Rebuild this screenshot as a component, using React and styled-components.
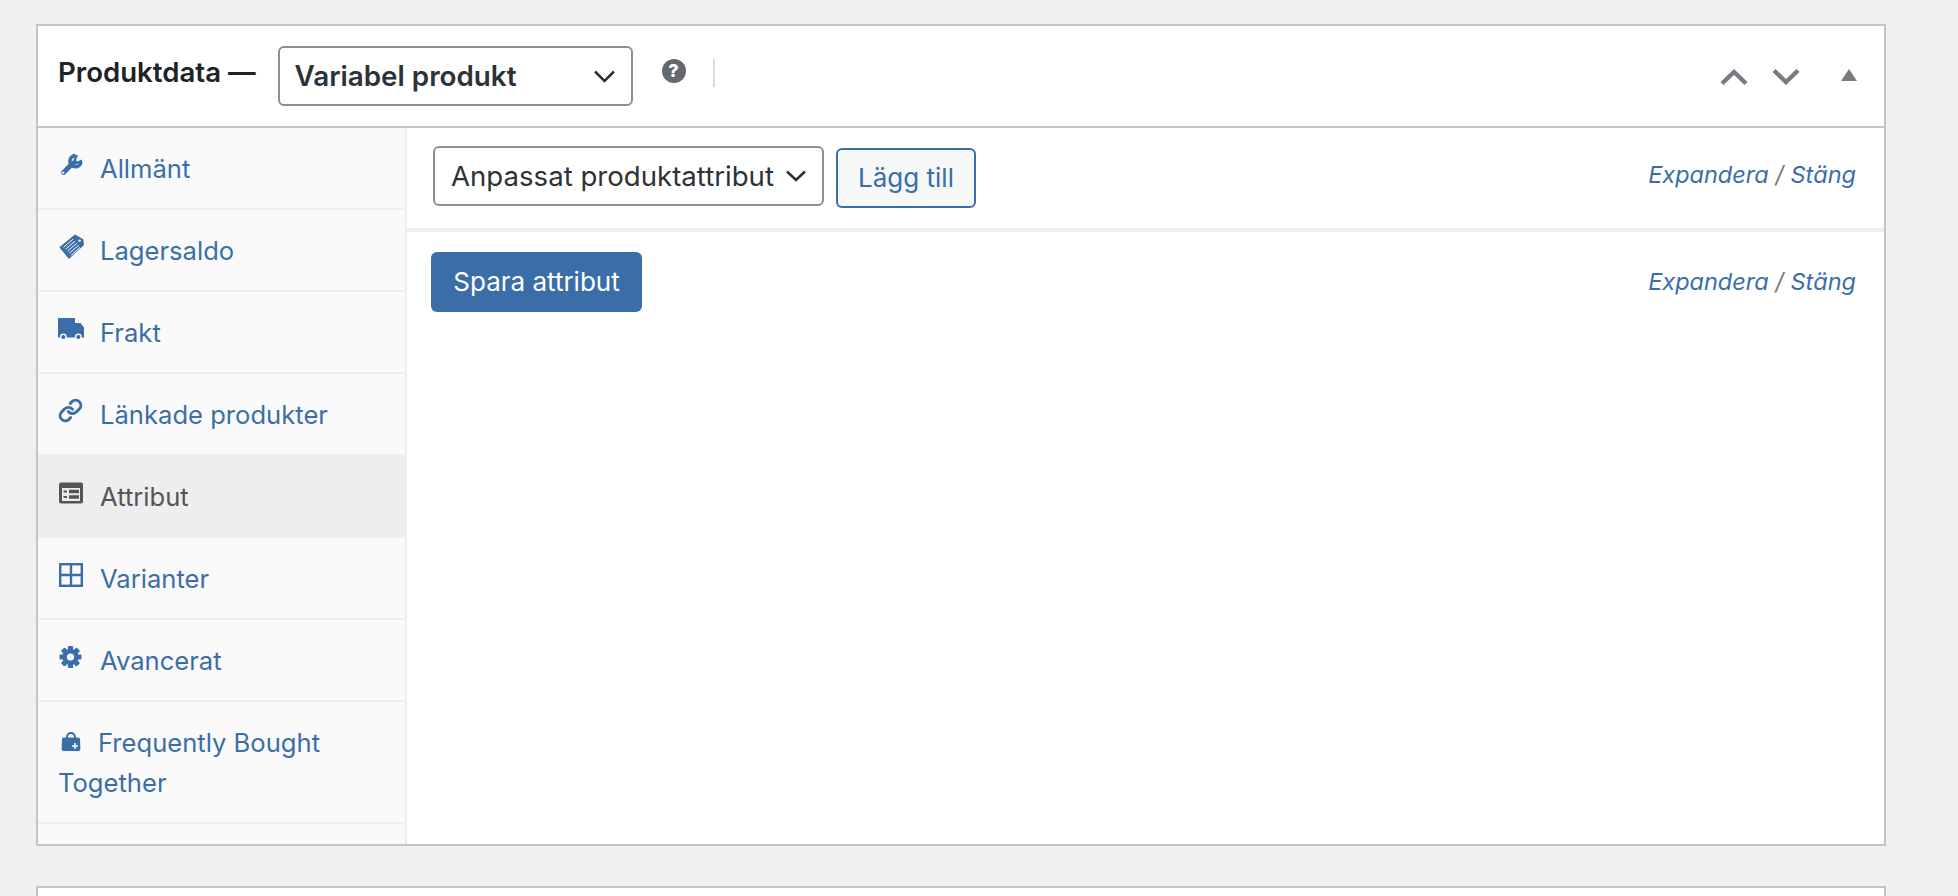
import React from 'react';
import styled, { createGlobalStyle } from 'styled-components';

const GlobalStyle = createGlobalStyle`
  html, body {
    margin: 0;
    height: 100%;
    overflow: hidden;
    background: #f0f0f1;
  }
`;

const BLUE = '#3b6ea9';

const Page = styled.div`
  height: 896px;
  overflow: hidden;
  padding: 24px 72px 0 36px;
  font-family: Inter, "Liberation Sans", sans-serif;
  font-size: 26px;
  line-height: 40px;
  color: #2c3338;
`;

const Card = styled.section`
  box-sizing: border-box;
  width: 1850px;
  height: 822px;
  background: #fff;
  border: 2px solid #c3c4c7;
  display: flex;
  flex-direction: column;
`;

const NextCard = styled.div`
  box-sizing: border-box;
  width: 1850px;
  height: 60px;
  margin-top: 40px;
  background: #fff;
  border: 2px solid #c3c4c7;
`;

const Header = styled.header`
  height: 100px;
  flex: none;
  display: flex;
  align-items: flex-start;
  padding: 0 27px 0 20px;
  border-bottom: 2px solid #c3c4c7;
`;

const Title = styled.h2`
  margin: 26px 22px 0 0;
  font-size: 27.6px;
  line-height: 40px;
  font-weight: 600;
  color: #1d2327;
`;

const Select = styled.div`
  box-sizing: border-box;
  width: ${(p) => p.$width}px;
  height: 60px;
  flex: none;
  display: flex;
  align-items: center;
  justify-content: space-between;
  padding: 0 16px 0 ${(p) => (p.$strong ? 15 : 16)}px;
  margin-top: ${(p) => p.$top}px;
  background: #fff;
  border: 2px solid #8c8f94;
  border-radius: 6px;
  font-weight: ${(p) => (p.$strong ? 600 : 400)};
  font-size: ${(p) => (p.$strong ? 27.8 : 27.6)}px;
`;

const Help = styled.span`
  width: 24px;
  height: 24px;
  flex: none;
  margin: 33px 0 0 29px;
  border-radius: 50%;
  background: #646970;
  color: #fff;
  font-size: 18px;
  line-height: 24px;
  font-weight: 800;
  text-align: center;
`;

const Divider = styled.span`
  width: 2px;
  height: 28px;
  flex: none;
  margin: 33px 0 0 27px;
  background: #dcdcde;
`;

const HeaderActions = styled.div`
  margin-left: auto;
  display: flex;
  align-items: flex-start;
  padding-top: 43px;
`;

const ActionIcon = styled.svg`
  display: block;
  flex: none;
  margin-left: ${(p) => p.$gap}px;
`;

const Body = styled.div`
  flex: 1;
  display: flex;
  min-height: 0;
`;

const Tabs = styled.ul`
  box-sizing: content-box;
  width: 367px;
  flex: none;
  margin: 0;
  padding: 0;
  list-style: none;
  background: #fafafa;
  border-right: 2px solid #eee;
`;

const Tab = styled.li`
  box-sizing: border-box;
  min-height: 82px;
  padding: 21px 20px 19px;
  border-bottom: 2px solid #eee;
  font-size: 25.6px;
  background: ${(p) => (p.$active ? '#eee' : 'transparent')};
  color: ${(p) => (p.$active ? '#555' : BLUE)};
`;

const TabIcon = styled.svg`
  width: 26px;
  height: 26px;
  margin-right: ${(p) => p.$gap ?? 16}px;
  vertical-align: 0;
`;

const Panel = styled.div`
  flex: 1;
  min-width: 0;
`;

const Toolbar = styled.div`
  box-sizing: border-box;
  height: 104px;
  display: flex;
  align-items: flex-start;
  gap: 12px;
  padding: 18px 28px 0 26px;
  border-bottom: 4px solid #eee;
`;

const AddButton = styled.button`
  box-sizing: border-box;
  width: 140px;
  height: 60px;
  margin-top: 2px;
  padding: 0;
  font: inherit;
  color: ${BLUE};
  background: #f6f7f7;
  border: 2px solid ${BLUE};
  border-radius: 6px;
`;

const SaveRow = styled.div`
  display: flex;
  align-items: flex-start;
  padding: 20px 28px 0 24px;
`;

const SaveButton = styled.button`
  box-sizing: border-box;
  width: 211px;
  height: 60px;
  padding: 0;
  font: inherit;
  color: #fff;
  background: ${BLUE};
  border: none;
  border-radius: 6px;
`;

const ExpandLinks = styled.div`
  margin-left: auto;
  margin-top: ${(p) => p.$top}px;
  font-size: 23.5px;
  font-style: italic;
  color: #777;
  white-space: nowrap;
`;

const TextLink = styled.a`
  color: ${BLUE};
`;

const Chevron = ({ w, h }) => (
  <svg width={w} height={h + 2} viewBox={`0 0 ${w} ${h + 2}`} fill="none">
    <path d={`M1 1.5 L${w / 2} ${h} L${w - 1} 1.5`} stroke="#2c3338" strokeWidth="2.6" />
  </svg>
);

const WrenchIcon = () => (
  <TabIcon viewBox="0 0 26 26" fill="none">
    <path d="M5.6 20.4 L14.5 11.5" stroke={BLUE} strokeWidth="5" strokeLinecap="round" />
    <path d="M17.4 3.6 A5.6 5.6 0 1 0 23 10" stroke={BLUE} strokeWidth="3.6" />
    <path d="M15 9 L17.6 3 L20 3 L18 8 L19 9.6 L24 7.6 L24 10.2 L17 13 Z" fill={BLUE} />
    <circle cx="5.2" cy="20.8" r="1.2" fill="#fafafa" />
  </TabIcon>
);

const TagIcon = () => (
  <TabIcon viewBox="0 0 26 26">
    <path d="M1.3 13.3 L17 .5 L25.3 5.3 L26 11 L11 25 Z" fill={BLUE} />
    <path d="M5.6 13.2 L15 5.2 M7.5 15.2 L16.9 7.2 M9.4 17.2 L18.8 9.2 M11.3 19.2 L20.7 11.2 M13.2 21.2 L22 13.4" stroke="#fafafa" strokeWidth="1" />
    <circle cx="21.6" cy="6.6" r="1.2" fill="#fafafa" />
  </TabIcon>
);

const TruckIcon = () => (
  <TabIcon viewBox="0 0 26 26">
    <path d="M0 2 H17 V7 H22.5 L26 11.5 V21.5 H0 Z" fill={BLUE} />
    <circle cx="5.3" cy="21" r="3.4" fill="#fafafa" />
    <circle cx="5.3" cy="21" r="2.1" fill={BLUE} />
    <circle cx="20.3" cy="21" r="3.4" fill="#fafafa" />
    <circle cx="20.3" cy="21" r="2.1" fill={BLUE} />
  </TabIcon>
);

const LinkIcon = () => (
  <TabIcon viewBox="0 0 25 25" fill="none" stroke={BLUE} strokeWidth="2.8" strokeLinecap="round">
    <path d="M10 13a5 5 0 0 0 7.54.54l3-3a5 5 0 0 0-7.07-7.07l-1.72 1.71" />
    <path d="M14 11a5 5 0 0 0-7.54-.54l-3 3a5 5 0 0 0 7.07 7.07l1.71-1.71" />
  </TabIcon>
);

const ListIcon = () => (
  <TabIcon viewBox="0 0 26 26">
    <rect x="1" y="2.5" width="24" height="21" rx="2" fill="#555" />
    <rect x="4" y="8" width="18" height="13" fill="#eee" />
    <path d="M5.5 11.5 H9 M5.5 17 H9" stroke="#555" strokeWidth="1.8" />
    <path d="M11 11.5 H21 M11 17 H21" stroke="#555" strokeWidth="3.6" />
  </TabIcon>
);

const GridIcon = () => (
  <TabIcon viewBox="0 0 26 26" fill="none" stroke={BLUE} strokeWidth="2.4">
    <rect x="2.2" y="2.2" width="21.6" height="21.6" />
    <path d="M13 2 V24 M2 13 H24" />
  </TabIcon>
);

const GearIcon = () => (
  <TabIcon viewBox="0 0 26 26">
    <g fill={BLUE}>
      <circle cx="12.5" cy="13" r="8" />
      {[0, 45, 90, 135, 180, 225, 270, 315].map((deg) => (
        <rect key={deg} x="9.9" y="2" width="5.2" height="5" rx="1" transform={`rotate(${deg} 12.5 13)`} />
      ))}
    </g>
    <circle cx="12.5" cy="13" r="3.6" fill="#fafafa" />
  </TabIcon>
);

const BagIcon = () => (
  <TabIcon viewBox="0 -3.5 26 26" $gap={14}>
    <path d="M9 9 V7.5 A4 4 0 0 1 17 7.5 V9" fill="none" stroke={BLUE} strokeWidth="2" />
    <path d="M5.6 8 H20.4 A1.6 1.6 0 0 1 22 9.6 L22.4 19.6 A2 2 0 0 1 20.4 21.6 H5.6 A2 2 0 0 1 3.6 19.6 L4 9.6 A1.6 1.6 0 0 1 5.6 8 Z" fill={BLUE} />
    <path d="M17 13.6 V19.6 M14 16.6 H20" stroke="#fff" strokeWidth="1.5" />
  </TabIcon>
);

const tabs = [
  { label: 'Allmänt', Icon: WrenchIcon },
  { label: 'Lagersaldo', Icon: TagIcon },
  { label: 'Frakt', Icon: TruckIcon },
  { label: 'Länkade produkter', Icon: LinkIcon },
  { label: 'Attribut', Icon: ListIcon, active: true },
  { label: 'Varianter', Icon: GridIcon },
  { label: 'Avancerat', Icon: GearIcon },
  { label: 'Frequently Bought Together', Icon: BagIcon },
];

const Expand = ({ top }) => (
  <ExpandLinks $top={top}>
    <TextLink>Expandera</TextLink> / <TextLink>Stäng</TextLink>
  </ExpandLinks>
);

export default function App() {
  return (
    <Page>
      <GlobalStyle />
      <Card>
        <Header>
          <Title>Produktdata —</Title>
          <Select $width={355} $top={20} $strong>
            Variabel produkt
            <Chevron w={21} h={11} />
          </Select>
          <Help>?</Help>
          <Divider />
          <HeaderActions>
            <ActionIcon width="28" height="16" viewBox="0 0 28 16" fill="none" $gap={0}>
              <path d="M2 14.5 L14 3 L26 14.5" stroke="#787c82" strokeWidth="4.4" />
            </ActionIcon>
            <ActionIcon width="28" height="16" viewBox="0 0 28 16" fill="none" $gap={24}>
              <path d="M2 1.5 L14 13 L26 1.5" stroke="#787c82" strokeWidth="4.4" />
            </ActionIcon>
            <ActionIcon width="16" height="12" viewBox="0 0 16 12" $gap={41}>
              <path d="M8 0 L16 12 H0 Z" fill="#787c82" />
            </ActionIcon>
          </HeaderActions>
        </Header>
        <Body>
          <Tabs>
            {tabs.map(({ label, Icon, active }) => (
              <Tab key={label} $active={active}>
                <Icon />
                {label}
              </Tab>
            ))}
          </Tabs>
          <Panel>
            <Toolbar>
              <Select $width={391} $top={0}>
                Anpassat produktattribut
                <Chevron w={20} h={10} />
              </Select>
              <AddButton>Lägg till</AddButton>
              <Expand top={9} />
            </Toolbar>
            <SaveRow>
              <SaveButton>Spara attribut</SaveButton>
              <Expand top={10} />
            </SaveRow>
          </Panel>
        </Body>
      </Card>
      <NextCard />
    </Page>
  );
}
